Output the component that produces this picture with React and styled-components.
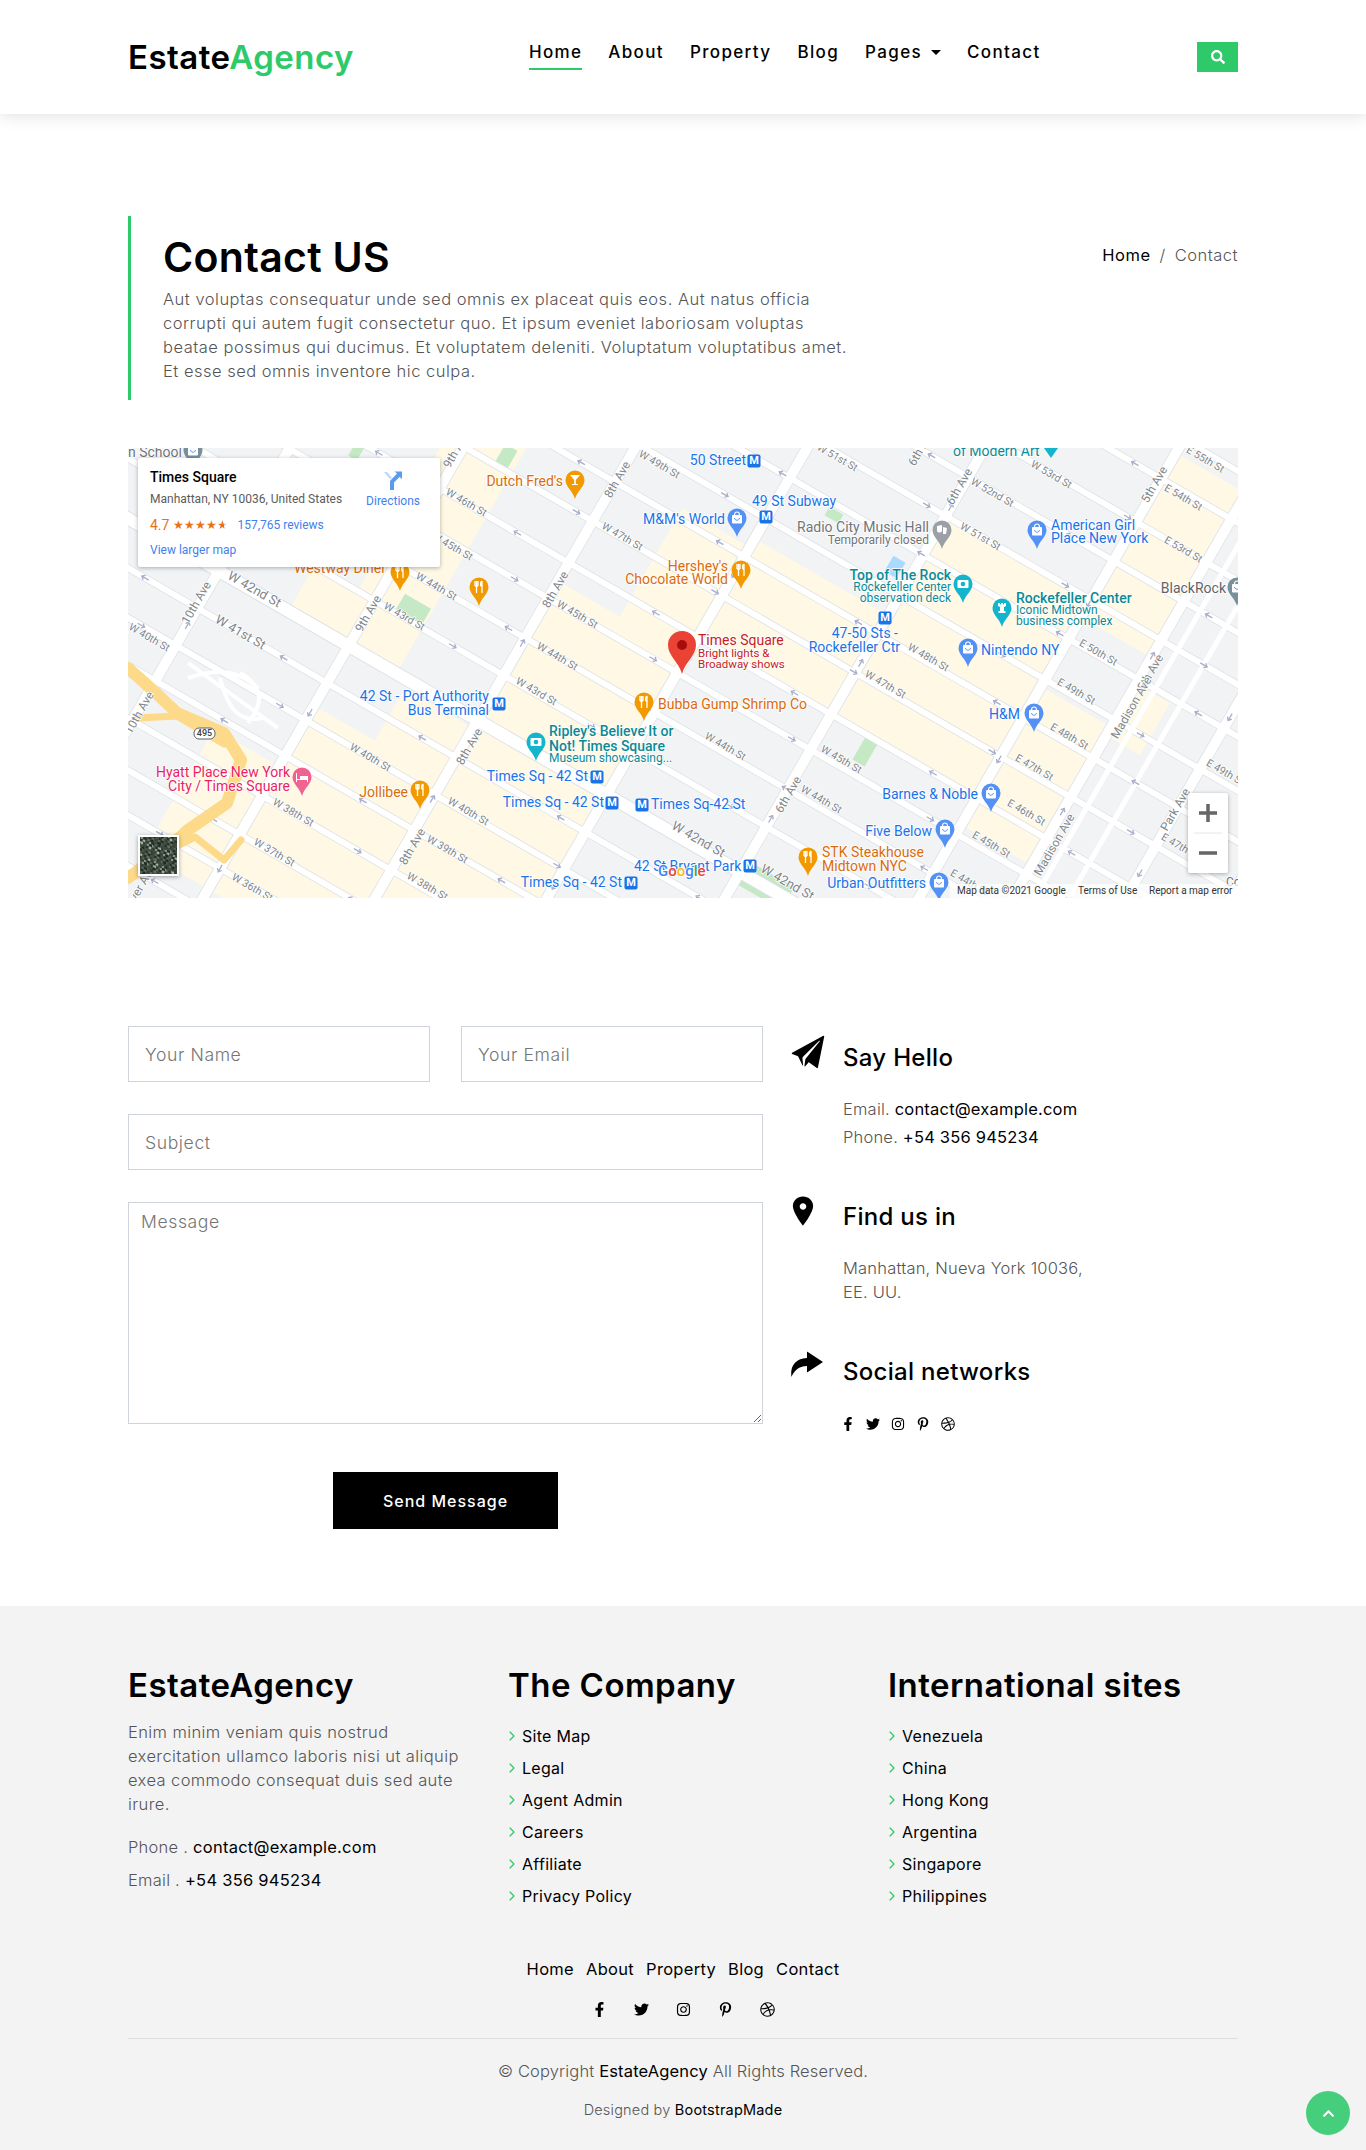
import React from 'react';
import styled, { createGlobalStyle } from 'styled-components';
import { FaSearch, FaFacebookF, FaTwitter, FaInstagram, FaPinterestP, FaDribbble, FaChevronUp } from 'react-icons/fa';
import { IoIosPaperPlane, IoIosPin, IoIosRedo, IoIosArrowForward } from 'react-icons/io';

const GlobalStyle = createGlobalStyle`
  * { box-sizing: border-box; }
  body {
    margin: 0;
    background: #fff;
    color: #555;
    font-family: Inter, 'Liberation Sans', sans-serif;
    font-size: 16.5px;
    letter-spacing: 0.5px;
    line-height: 24px;
  }
`;

const Container = styled.div`
  width: 1110px;
  margin: 0 auto;
`;

// Header
const Header = styled.header`
  height: 114px;
  background: #fff;
  box-shadow: 0 2px 15px rgba(0, 0, 0, 0.12);
`;

const HeaderRow = styled(Container)`
  display: flex;
  align-items: center;
  height: 100%;
`;

const Logo = styled.div`
  font-size: 33px;
  font-weight: 600;
  color: #000;
  letter-spacing: 0.45px;
  line-height: 40px;
  span { color: #2eca6a; }
`;

const Nav = styled.nav`
  display: flex;
  gap: 26px;
  margin-left: 175px;
  margin-top: -5px;
`;

const NavLink = styled.a`
  position: relative;
  color: #000;
  font-size: 17px;
  font-weight: 500;
  letter-spacing: 1.35px;
  padding-bottom: 4px;
  border-bottom: 2px solid ${(props) => (props.$active ? '#2eca6a' : 'transparent')};
`;

const Caret = styled.i`
  display: inline-block;
  margin-left: 9px;
  vertical-align: 3px;
  border-top: 5px solid #000;
  border-left: 5.5px solid transparent;
  border-right: 5.5px solid transparent;
`;

const SearchButton = styled.button`
  display: flex;
  align-items: center;
  justify-content: center;
  margin-left: auto;
  width: 41px;
  height: 30px;
  border: 0;
  background: #2eca6a;
  color: #fff;
  font-size: 14px;
`;

// Title
const TitleSection = styled(Container)`
  display: flex;
  justify-content: space-between;
  margin-top: 102px;
`;

const TitleBlock = styled.div`
  width: 720px;
  height: 184px;
  padding: 17px 0 0 32px;
  border-left: 3px solid #2eca6a;
`;

const Title = styled.h1`
  margin: 0 0 6px;
  color: #000;
  font-size: 41px;
  font-weight: 600;
  line-height: 48px;
  letter-spacing: 0.3px;
`;

const Lead = styled.p`
  margin: 0;
  width: 690px;
  font-weight: 300;
  color: #555;
`;

const Breadcrumb = styled.div`
  display: flex;
  gap: 9px;
  margin-top: 27px;
  font-weight: 300;
  color: #555;
  b { font-weight: 400; color: #000; }
`;

// Map
const MapFrame = styled(Container)`
  position: relative;
  height: 450px;
  margin-top: 48px;
  overflow: hidden;
  background: #f1f3f4;
  letter-spacing: 0;
  svg.map { display: block; }
`;

const MapText = styled.text`
  font-family: Roboto, 'Liberation Sans', sans-serif;
  font-size: ${(props) => props.$size || 13}px;
  font-weight: ${(props) => props.$weight || 400};
  fill: ${(props) => props.$color};
  text-anchor: ${(props) => props.$anchor || 'start'};
  stroke: #fff;
  stroke-width: ${(props) => (props.$halo === false ? 0 : 1.6)}px;
  paint-order: stroke;
  dominant-baseline: middle;
`;

const InfoCard = styled.div`
  position: absolute;
  left: 10px;
  top: 10px;
  width: 302px;
  height: 109px;
  padding: 9px 12px;
  background: #fff;
  border-radius: 2px;
  box-shadow: 0 1px 4px rgba(0, 0, 0, 0.3);
  font-family: Roboto, 'Liberation Sans', sans-serif;
  font-size: 12px;
  line-height: 16px;
  color: #5b5b5b;
`;

const PlaceName = styled.div`
  color: #000;
  font-size: 14px;
  font-weight: 500;
  line-height: 20px;
`;

const Address = styled.div`
  margin-top: 4px;
  font-size: 12px;
`;

const Rating = styled.div`
  display: flex;
  align-items: center;
  margin-top: 10px;
  color: #e7711b;
  font-size: 14px;
`;

const Stars = styled.span`
  margin: 0 9px 0 4px;
  font-size: 12px;
`;

const PartStar = styled.span`
  background: linear-gradient(90deg, #e7711b 65%, #c8c8c8 65%);
  -webkit-background-clip: text;
  background-clip: text;
  color: transparent;
`;

const CardLink = styled.a`
  color: #427fed;
  font-size: 12px;
`;

const LargerMap = styled(CardLink)`
  display: block;
  margin-top: 9px;
`;

const Directions = styled.div`
  position: absolute;
  top: 12px;
  right: 20px;
  display: flex;
  flex-direction: column;
  align-items: center;
  gap: 3px;
`;

// Contact
const ContactSection = styled(Container)`
  display: grid;
  grid-template-columns: 635px 445px;
  column-gap: 30px;
  margin-top: 128px;
`;

const Form = styled.form`
  display: grid;
  grid-template-columns: 302px 302px;
  column-gap: 31px;
  row-gap: 32px;
`;

const Field = styled.input`
  height: 56px;
  width: 100%;
  padding: 0 16px;
  border: 1px solid #ced4da;
  border-radius: 0;
  outline: none;
  font-family: inherit;
  font-size: 17.6px;
  letter-spacing: 0.6px;
  font-weight: 300;
  grid-column: ${(props) => (props.$wide ? '1 / 3' : 'auto')};
  ::placeholder { color: #6c757d; opacity: 1; }
`;

const MessageArea = styled.textarea`
  display: block;
  grid-column: 1 / 3;
  width: 100%;
  height: 222px;
  padding: 6px 12px;
  border: 1px solid #ced4da;
  border-radius: 0;
  outline: none;
  font-family: inherit;
  font-size: 17.6px;
  letter-spacing: 0.6px;
  line-height: 26px;
  font-weight: 300;
  ::placeholder { color: #6c757d; opacity: 1; }
`;

const SendButton = styled.button`
  grid-column: 1 / 3;
  justify-self: center;
  width: 225px;
  height: 57px;
  margin-top: 16px;
  border: 0;
  background: #000;
  color: #fff;
  font-family: inherit;
  font-size: 16px;
  font-weight: 500;
  letter-spacing: 1px;
`;

const InfoColumn = styled.div`
  display: flex;
  flex-direction: column;
  padding-top: 14px;
`;

const InfoBlock = styled.div`
  display: grid;
  grid-template-columns: 50px 1fr;
  margin-bottom: ${(props) => props.$gap}px;
`;

const InfoIcon = styled.div`
  color: #000;
  font-size: ${(props) => props.$size || 36}px;
  line-height: 0;
  margin-left: ${(props) => props.$left || 0}px;
  margin-top: ${(props) => props.$top || 0}px;
`;

const InfoHeading = styled.h4`
  margin: 0;
  color: #000;
  font-size: 24px;
  font-weight: 500;
  line-height: 36px;
  letter-spacing: 0.3px;
`;

const InfoBody = styled.div`
  margin-top: 21px;
  font-weight: 300;
  color: #555;
  letter-spacing: 0.2px;
  b { font-weight: 400; color: #000; }
`;

const InfoLine = styled.div`
  margin-bottom: 4px;
`;

const SocialRow = styled.div`
  display: flex;
  align-items: center;
  gap: 11px;
  margin-top: 27px;
  margin-left: -2px;
  color: #000;
  font-size: 14px;
`;

// Footer
const Footer = styled.footer`
  margin-top: 77px;
  height: 544px;
  background: #f3f3f3;
`;

const FooterColumns = styled(Container)`
  display: grid;
  grid-template-columns: 350px 350px 350px;
  column-gap: 30px;
  padding-top: 55px;
`;

const FooterHeading = styled.h3`
  margin: 0;
  color: #000;
  font-size: 33px;
  font-weight: 600;
  line-height: 48px;
  letter-spacing: 0.45px;
`;

const FooterText = styled.p`
  margin: 11px 0 19px;
  width: 340px;
  font-weight: 300;
  color: #555;
  letter-spacing: 0.4px;
`;

const FooterContact = styled.div`
  margin-bottom: 9px;
  font-weight: 300;
  letter-spacing: 0.25px;
  b { font-weight: 400; color: #000; }
`;

const FooterList = styled.ul`
  margin: 11px 0 0;
  padding: 0;
  list-style: none;
`;

const FooterItem = styled.li`
  display: flex;
  align-items: center;
  height: 32px;
  color: #000;
  font-weight: 400;
  font-size: 16px;
  letter-spacing: 0.3px;
  svg { color: #2eca6a; font-size: 14px; margin: 0 3px 0 -3px; }
`;

const FooterNav = styled.div`
  display: flex;
  justify-content: center;
  gap: 12px;
  margin-top: 45px;
  color: #000;
  letter-spacing: 0.3px;
`;

const FooterSocial = styled.div`
  display: flex;
  justify-content: center;
  gap: 27px;
  margin-top: 21px;
  color: #000;
  font-size: 15px;
  line-height: 0;
`;

const Divider = styled(Container)`
  margin-top: 21px;
  border-top: 1px solid #ddd;
`;

const Copyright = styled.div`
  margin-top: 20px;
  text-align: center;
  font-weight: 300;
  letter-spacing: 0.15px;
  b { font-weight: 400; color: #000; }
`;

const Credits = styled.div`
  margin-top: 15px;
  text-align: center;
  font-size: 14.5px;
  font-weight: 300;
  letter-spacing: 0.2px;
  b { font-weight: 400; color: #000; }
`;

const BackToTop = styled.a`
  position: fixed;
  right: 16px;
  bottom: 15px;
  display: flex;
  align-items: center;
  justify-content: center;
  width: 44px;
  height: 44px;
  border-radius: 50%;
  background: #45ce7b;
  color: #fff;
  font-size: 13px;
`;

// Map data, all in local px of the 1110x450 frame. u/v are the rotated grid.
const avenues = [-10, 140, 290, 439, 588, 742, 910, 991, 1089, 1180];
const narrowAvenues = [1010, 1040, 1250];
const streets = [-535, -490, -440, -395, -350, -305, -258, -214, -169, -121, -80, -34, 9, 104, 147, 188, 234, 279, 318, 362, 405];

const creamBlocks = [
  [748, 904, -352, -125],
  [594, 736, -235, -125],
  [510, 582, -225, 55],
  [445, 510, -100, 55],
  [296, 434, 130, 342],
  [360, 434, 70, 130],
  [445, 582, 66, 342],
  [215, 284, 200, 342],
  [220, 284, 10, 55],
  [916, 985, -520, -330],
  [916, 985, -250, -90],
  [270, 345, -210, 55],
  [996, 1030, -300, -240],
];

const greens = [
  [378, 9, 14, 22],
  [285, 162, 30, 20],
  [706, 67, 16, 10],
  [228, 4, 10, 14],
  [738, 302, 14, 30],
  [638, 438, 50, 26],
];

const streetLabels = [
  ['W 46th St', 338, 55], ['W 47th St', 494, 89], ['W 45th St', 324, 99], ['W 44th St', 308, 139],
  ['W 43rd St', 276, 169], ['W 45th St', 449, 167], ['W 44th St', 429, 209], ['W 42nd St', 126, 142, 13],
  ['W 41st St', 112, 185, 13], ['W 40th St', 21, 190], ['W 49th St', 531, 17], ['W 51st St', 709, 10],
  ['W 53rd St', 923, 27], ['W 52nd St', 864, 45], ['W 51st St', 852, 89], ['E 55th St', 1077, 12],
  ['E 54th St', 1055, 50], ['E 53rd St', 1055, 102], ['E 50th St', 970, 205], ['W 48th St', 800, 210],
  ['W 43rd St', 408, 244], ['W 40th St', 242, 310], ['W 40th St', 340, 364], ['W 38th St', 165, 365],
  ['W 39th St', 319, 402], ['W 37th St', 146, 405], ['W 38th St', 299, 439], ['W 36th St', 124, 440],
  ['W 47th St', 757, 237], ['W 44th St', 597, 299], ['W 45th St', 713, 312], ['W 44th St', 693, 352],
  ['W 42nd St', 570, 392, 13], ['W 42nd St', 659, 435, 13], ['E 49th St', 948, 244], ['E 48th St', 941, 289],
  ['E 47th St', 906, 320], ['E 46th St', 898, 365], ['E 45th St', 863, 397], ['E 44th St', 841, 435],
  ['E 49th St', 1097, 325], ['E 47th St', 1052, 399],
];

const avenueLabels = [
  ['8th Ave', 490, 32], ['8th Ave', 428, 142], ['9th Ave', 241, 166], ['9th Ave', 329, 2],
  ['10th Ave', 69, 155], ['10th Ave', 12, 265], ['8th Ave', 342, 299], ['8th Ave', 285, 399],
  ['6th Ave', 832, 39], ['6th Ave', 661, 347], ['5th Ave', 1027, 37], ['5th Ave', 1023, 225],
  ['Madison Ave', 1004, 260], ['Madison Ave', 927, 397], ['Park Ave', 1048, 362], ['Dyer Ave', 13, 439],
  ['6th Ave', 794, 0],
];

const BLUE = '#1a73e8';
const ORANGE = '#d96c0c';
const TEAL = '#0b8a96';
const PINK = '#e91e63';
const GRAY = '#70757a';
const RED = '#c5221f';

const placeLabels = [
  ['n School', 0, 5, GRAY, 'start', 14],
  ["Dutch Fred's", 435, 34, ORANGE, 'end', 14],
  ['Westway Diner', 258, 121, ORANGE, 'end', 14],
  ["Hershey's", 600, 119, ORANGE, 'end', 14],
  ['Chocolate World', 600, 132, ORANGE, 'end', 14],
  ['Bubba Gump Shrimp Co', 530, 257, ORANGE, 'start', 14],
  ['Jollibee', 280, 345, ORANGE, 'end', 14],
  ['STK Steakhouse', 694, 405, ORANGE, 'start', 14],
  ['Midtown NYC', 694, 419, ORANGE, 'start', 14],
  ["M&M's World", 597, 72, BLUE, 'end', 14],
  ['American Girl', 923, 78, BLUE, 'start', 14],
  ['Place New York', 923, 91, BLUE, 'start', 14],
  ['Nintendo NY', 853, 203, BLUE, 'start', 14],
  ['H&M', 892, 267, BLUE, 'end', 14],
  ['Barnes & Noble', 850, 347, BLUE, 'end', 14],
  ['Five Below', 804, 384, BLUE, 'end', 14],
  ['Urban Outfitters', 798, 436, BLUE, 'end', 14],
  ['50 Street', 618, 13, BLUE, 'end', 14],
  ['49 St Subway', 624, 54, BLUE, 'start', 14],
  ['47-50 Sts -', 770, 186, BLUE, 'end', 14],
  ['Rockefeller Ctr', 772, 200, BLUE, 'end', 14],
  ['42 St - Port Authority', 361, 249, BLUE, 'end', 14],
  ['Bus Terminal', 361, 263, BLUE, 'end', 14],
  ['Times Sq - 42 St', 460, 329, BLUE, 'end', 14],
  ['Times Sq - 42 St', 476, 355, BLUE, 'end', 14],
  ['Times Sq-42 St', 523, 357, BLUE, 'start', 14],
  ['Times Sq - 42 St', 494, 435, BLUE, 'end', 14],
  ['42 St Bryant Park', 506, 419, BLUE, 'start', 14],
  ['of Modern Art', 825, 4, TEAL, 'start', 14],
  ['Top of The Rock', 823, 128, TEAL, 'end', 14, 500],
  ['Rockefeller Center', 823, 140, TEAL, 'end', 12],
  ['observation deck', 823, 151, TEAL, 'end', 12],
  ['Rockefeller Center', 888, 151, TEAL, 'start', 14, 500],
  ['Iconic Midtown', 888, 163, TEAL, 'start', 12],
  ['business complex', 888, 174, TEAL, 'start', 12],
  ["Ripley's Believe It or", 421, 284, TEAL, 'start', 14, 500],
  ['Not! Times Square', 421, 299, TEAL, 'start', 14, 500],
  ['Museum showcasing...', 421, 311, TEAL, 'start', 12],
  ['Radio City Music Hall', 801, 80, GRAY, 'end', 14],
  ['Temporarily closed', 801, 93, GRAY, 'end', 12],
  ['BlackRock', 1098, 141, '#5f6368', 'end', 14],
  ['Hyatt Place New York', 162, 325, PINK, 'end', 14],
  ['City / Times Square', 162, 339, PINK, 'end', 14],
  ['Times Square', 570, 193, RED, 'start', 14],
  ['Bright lights &', 570, 206, RED, 'start', 11.5],
  ['Broadway shows', 570, 217, RED, 'start', 11.5],
  ['Cor', 1098, 435, GRAY, 'start', 12],
];

const pins = [
  [447, 32, '#f29900', 'glass'], [272, 124, '#f29900', 'food'], [351, 139, '#f29900', 'food'],
  [613, 122, '#f29900', 'food'], [516, 254, '#f29900', 'food'], [292, 342, '#f29900', 'food'],
  [680, 409, '#f29900', 'food'], [609, 70, '#5491f5', 'bag'], [909, 82, '#5491f5', 'bag'],
  [840, 200, '#5491f5', 'bag'], [906, 265, '#5491f5', 'bag'], [863, 345, '#5491f5', 'bag'],
  [817, 381, '#5491f5', 'bag'], [811, 434, '#5491f5', 'bag'], [835, 136, '#12b5cb', 'camera'],
  [874, 160, '#12b5cb', 'tower'], [408, 294, '#12b5cb', 'camera'], [814, 82, '#9aa0a6', 'mask'],
  [1109, 139, '#78909c', 'bag'], [174, 329, '#f06292', 'bed'], [65, 2, '#78909c', 'bag'],
];

const subways = [[626, 13], [638, 69], [757, 170], [371, 256], [469, 329], [484, 355], [514, 357], [503, 435], [622, 418]];

function Glyph({ kind }) {
  if (kind === 'food') {
    return <path d="M-4-6v5M-2.5-6v5M-1-6v5M-4-1h3M-2.5-1v7M3-6v12M3-6c-2 1-2 5 0 6" stroke="#fff" strokeWidth="1.3" fill="none" />;
  }
  if (kind === 'glass') {
    return <path d="M-5-5H5L.8 0V4H3V5H-3V4H-.8V0Z" fill="#fff" />;
  }
  if (kind === 'camera') {
    return (
      <g>
        <rect x="-5.5" y="-4" width="11" height="8" rx="1" fill="#fff" />
        <circle r="2.3" fill="#12b5cb" />
      </g>
    );
  }
  if (kind === 'tower') {
    return <path d="M-4-5h2v1.5h1V-5h2v1.5h1V-5h2v3L2-1V3H3.5V5H-3.5V3H-2V-1L-4-2Z" fill="#fff" />;
  }
  if (kind === 'mask') {
    return <path d="M-5-4 0-5V1C-1 3-4 3-5 1ZM1-3 5-2 4 4 1 4Z" fill="#fff" />;
  }
  if (kind === 'bed') {
    return <path d="M-6-4V5H-5V3H5V5H6V-1H-2V2H-5V-4Z" fill="#fff" />;
  }
  return (
    <g fill="none" stroke="#fff">
      <rect x="-5" y="-3" width="10" height="8.5" rx="1" fill="#fff" stroke="none" />
      <path d="M-2.5-3c0-4 5-4 5 0" strokeWidth="1.2" />
      <path d="M-2.5 0c.5 3 4.500 3 5 0" stroke="#5491f5" strokeWidth="1" />
    </g>
  );
}

function Pin({ x, y, color, kind }) {
  return (
    <g transform={`translate(${x} ${y})`}>
      <path d="M0 19C-2 11-9.500 7-9.500 0A9.500 9.500 0 1 1 9.500 0C9.500 7 2 11 0 19Z" fill={color} />
      <Glyph kind={kind} />
    </g>
  );
}

function Subway({ x, y }) {
  return (
    <g transform={`translate(${x} ${y})`}>
      <rect x="-6.500" y="-6.500" width="13" height="13" rx="2" fill={BLUE} />
      <MapText $size={11} $weight={700} $color="#fff" $anchor="middle" $halo={false} y="0.5">M</MapText>
    </g>
  );
}

function OneWayArrows() {
  const items = [];
  streets.forEach((v, i) => {
    const dir = i % 2 === 0 ? 0 : 180;
    for (let u = 60; u < 1300; u += 160) {
      items.push(<path key={`s${v}-${u}`} transform={`translate(${u + (i % 3) * 20} ${v}) rotate(${dir})`} d="M-4 0H4M1-2.500 4 0 1 2.500" stroke="#a8aecb" strokeWidth="1.300" fill="none" />);
    }
  });
  avenues.forEach((u, i) => {
    const dir = i % 2 === 0 ? 90 : -90;
    for (let v = -430; v < 360; v += 180) {
      items.push(<path key={`a${u}-${v}`} transform={`translate(${u} ${v + i * 14}) rotate(${dir})`} d="M-4 0H4M1-2.500 4 0 1 2.500" stroke="#a8aecb" strokeWidth="1.300" fill="none" />);
    }
  });
  return items;
}

function SatelliteThumb() {
  const dots = [];
  for (let i = 0; i < 220; i++) {
    const px = 12 + ((i * 13) % 37);
    const py = 389 + ((i * 29 + (i % 7) * 5) % 37);
    dots.push(<circle key={i} cx={px} cy={py} r={0.6 + (i % 3) * 0.4} fill={i % 4 === 0 ? '#a4ad9c' : i % 4 === 1 ? '#5f6f57' : '#20281f'} />);
  }
  return (
    <g>
      <rect x="10" y="387" width="41" height="41" fill="#fff" style={{ filter: 'drop-shadow(0 1px 2px rgba(0,0,0,.35))' }} />
      <svg x="12" y="389" width="37" height="37" viewBox="12 389 37 37">
        <rect x="12" y="389" width="37" height="37" fill="#3c4a40" />
        {dots}
      </svg>
    </g>
  );
}

function MapDrawing() {
  return (
    <svg className="map" width="1110" height="450" viewBox="0 0 1110 450">
      <rect width="1110" height="450" fill="#f1f3f4" />
      <g transform="rotate(30)">
        {creamBlocks.map(([u0, u1, v0, v1]) => (
          <rect key={`${u0}${v0}`} x={u0} y={v0} width={u1 - u0} height={v1 - v0} fill="#fef8e4" />
        ))}
      </g>
      {greens.map(([x, y, w, h]) => (
        <rect key={`${x}${y}`} x={x - w / 2} y={y - h / 2} width={w} height={h} fill="#c5e8c5" transform={`rotate(30 ${x} ${y})`} />
      ))}
      <rect x="760" y="110" width="14" height="18" fill="#aadaff" transform="rotate(30 767 119)" />
      <g transform="rotate(30)">
        {streets.map((v) => <rect key={v} x="-400" y={v - 3.800} width="1900" height="7.600" fill="#dfe2e6" />)}
        {avenues.map((u) => <rect key={u} x={u - 5.800} y="-800" width="11.600" height="1500" fill="#dfe2e6" />)}
        <rect x="-400" y="54" width="1900" height="14" fill="#dfe2e6" />
        {streets.map((v) => <rect key={v} x="-400" y={v - 3} width="1900" height="6" fill="#fff" />)}
        <rect x="-400" y="55" width="1900" height="12" fill="#fff" />
        {avenues.map((u) => <rect key={u} x={u - 5} y="-800" width="10" height="1500" fill="#fff" />)}
        {narrowAvenues.map((u) => <rect key={u} x={u - 2.500} y="-800" width="5" height="1500" fill="#fff" />)}
        <OneWayArrows />
      </g>
      <g fill="none" stroke="#fdd98a" strokeLinecap="round" strokeLinejoin="round">
        <path d="M0 220 28 245 49 265 96 285 113 312 99 355 60 382 38 402 0 430" strokeWidth="12" />
        <path d="M10 270 49 268 96 296" strokeWidth="7" />
        <path d="M45 400 67 389 96 412 113 392" strokeWidth="7" />
      </g>
      <g fill="none" stroke="#fff" strokeWidth="4">
        <path d="M60 230C90 220 110 222 130 240M92 230C100 260 110 275 135 270M112 225C130 235 140 250 120 275M60 215 150 280" />
      </g>
      <g>
        <rect x="66" y="280" width="21" height="11" rx="5" fill="#fff" stroke="#5f6368" />
        <MapText $size={9} $weight={500} $color="#3c4043" $anchor="middle" $halo={false} x="76.500" y="286">495</MapText>
      </g>
      {streetLabels.map(([t, x, y, size]) => (
        <MapText key={`${t}${x}`} $size={size || 10.500} $color="#80868b" $anchor="middle" transform={`translate(${x} ${y}) rotate(30)`}>{t}</MapText>
      ))}
      {avenueLabels.map(([t, x, y]) => (
        <MapText key={`${t}${x}`} $size={12} $color="#80868b" $anchor="middle" transform={`translate(${x} ${y}) rotate(-60)`}>{t}</MapText>
      ))}
      {pins.map(([x, y, color, kind]) => <Pin key={`${x}${y}`} x={x} y={y} color={color} kind={kind} />)}
      <path d="M923 10 916 0H930Z" fill="#12b5cb" />
      <path d="M554 226C551 214 540 208 540 197A14 14 0 1 1 568 197C568 208 557 214 554 226Z" fill="#ea4335" />
      <circle cx="554" cy="197" r="5" fill="#a50e0e" />
      {subways.map(([x, y]) => <Subway key={`${x}${y}`} x={x} y={y} />)}
      {placeLabels.map(([t, x, y, color, anchor, size, weight]) => (
        <MapText key={`${t}${x}${y}`} x={x} y={y} $color={color} $anchor={anchor} $size={size} $weight={weight}>{t}</MapText>
      ))}
      <MapText x="530" y="424" $size={15} $weight={500} $color="#4285f4">G<tspan fill="#ea4335">o</tspan><tspan fill="#fbbc05">o</tspan><tspan fill="#4285f4">g</tspan><tspan fill="#34a853">l</tspan><tspan fill="#ea4335">e</tspan></MapText>
      <rect x="822" y="436" width="288" height="14" fill="#fff" fillOpacity="0.7" />
      <MapText x="829" y="443" $size={10} $color="#333" $halo={false}>Map data ©2021 Google</MapText>
      <MapText x="950" y="443" $size={10} $color="#333" $halo={false}>Terms of Use</MapText>
      <MapText x="1021" y="443" $size={10} $color="#333" $halo={false}>Report a map error</MapText>
      <SatelliteThumb />
      <g>
        <rect x="1060" y="345" width="40" height="80" rx="2" fill="#fff" style={{ filter: 'drop-shadow(0 1px 2px rgba(0,0,0,.3))' }} />
        <path d="M1066 385H1094" stroke="#e6e6e6" />
        <path d="M1071 365H1089M1080 356V374M1071 405H1089" stroke="#666" strokeWidth="3.500" />
      </g>
    </svg>
  );
}

function DirectionsIcon() {
  return (
    <svg width="20" height="20" viewBox="0 0 20 20">
      <path d="M7 9 1 2H4L9 8Z" fill="#b9d8fb" />
      <path d="M7 20V11L14 3.500 11.500 1.500H19V9L16.500 7 11 12.500V20Z" fill="#5b9bec" />
    </svg>
  );
}

const navItems = ['Home', 'About', 'Property', 'Blog', 'Pages', 'Contact'];
const companyLinks = ['Site Map', 'Legal', 'Agent Admin', 'Careers', 'Affiliate', 'Privacy Policy'];
const siteLinks = ['Venezuela', 'China', 'Hong Kong', 'Argentina', 'Singapore', 'Philippines'];

function LinkList({ items }) {
  return (
    <FooterList>
      {items.map((item) => (
        <FooterItem key={item}>
          <IoIosArrowForward />
          {item}
        </FooterItem>
      ))}
    </FooterList>
  );
}

function App() {
  return (
    <>
      <GlobalStyle />
      <Header>
        <HeaderRow>
          <Logo>
            Estate<span>Agency</span>
          </Logo>
          <Nav>
            {navItems.map((item) => (
              <NavLink key={item} $active={item === 'Home'}>
                {item}
                {item === 'Pages' && <Caret />}
              </NavLink>
            ))}
          </Nav>
          <SearchButton aria-label="Search">
            <FaSearch />
          </SearchButton>
        </HeaderRow>
      </Header>

      <TitleSection>
        <TitleBlock>
          <Title>Contact US</Title>
          <Lead>
            Aut voluptas consequatur unde sed omnis ex placeat quis eos. Aut natus officia corrupti qui autem fugit
            consectetur quo. Et ipsum eveniet laboriosam voluptas beatae possimus qui ducimus. Et voluptatem deleniti.
            Voluptatum voluptatibus amet. Et esse sed omnis inventore hic culpa.
          </Lead>
        </TitleBlock>
        <Breadcrumb>
          <b>Home</b>
          <span>/</span>
          <span>Contact</span>
        </Breadcrumb>
      </TitleSection>

      <MapFrame>
        <MapDrawing />
        <InfoCard>
          <PlaceName>Times Square</PlaceName>
          <Address>Manhattan, NY 10036, United States</Address>
          <Rating>
            4.7
            <Stars>
              ★★★★<PartStar>★</PartStar>
            </Stars>
            <CardLink>157,765 reviews</CardLink>
          </Rating>
          <LargerMap>View larger map</LargerMap>
          <Directions>
            <DirectionsIcon />
            <CardLink>Directions</CardLink>
          </Directions>
        </InfoCard>
      </MapFrame>

      <ContactSection>
        <Form>
          <Field placeholder="Your Name" />
          <Field placeholder="Your Email" />
          <Field $wide placeholder="Subject" />
          <MessageArea placeholder="Message" />
          <SendButton type="button">Send Message</SendButton>
        </Form>
        <InfoColumn>
          <InfoBlock $gap={46}>
            <InfoIcon $size={40} $left={-5} $top={-8}>
              <IoIosPaperPlane />
            </InfoIcon>
            <div>
              <InfoHeading>Say Hello</InfoHeading>
              <InfoBody>
                <InfoLine>
                  Email. <b>contact@example.com</b>
                </InfoLine>
                <InfoLine>
                  Phone. <b>+54 356 945234</b>
                </InfoLine>
              </InfoBody>
            </div>
          </InfoBlock>
          <InfoBlock $gap={50}>
            <InfoIcon $size={36} $left={-8} $top={-6}>
              <IoIosPin />
            </InfoIcon>
            <div>
              <InfoHeading>Find us in</InfoHeading>
              <InfoBody>
                Manhattan, Nueva York 10036,
                <br />
                EE. UU.
              </InfoBody>
            </div>
          </InfoBlock>
          <InfoBlock $gap={0}>
            <InfoIcon $size={36} $left={-4} $top={-8}>
              <IoIosRedo />
            </InfoIcon>
            <div>
              <InfoHeading>Social networks</InfoHeading>
              <SocialRow>
                <FaFacebookF />
                <FaTwitter />
                <FaInstagram />
                <FaPinterestP />
                <FaDribbble />
              </SocialRow>
            </div>
          </InfoBlock>
        </InfoColumn>
      </ContactSection>

      <Footer>
        <FooterColumns>
          <div>
            <FooterHeading>EstateAgency</FooterHeading>
            <FooterText>
              Enim minim veniam quis nostrud exercitation ullamco laboris nisi ut aliquip exea commodo consequat duis
              sed aute irure.
            </FooterText>
            <FooterContact>
              Phone . <b>contact@example.com</b>
            </FooterContact>
            <FooterContact>
              Email . <b>+54 356 945234</b>
            </FooterContact>
          </div>
          <div>
            <FooterHeading>The Company</FooterHeading>
            <LinkList items={companyLinks} />
          </div>
          <div>
            <FooterHeading>International sites</FooterHeading>
            <LinkList items={siteLinks} />
          </div>
        </FooterColumns>
        <FooterNav>
          {['Home', 'About', 'Property', 'Blog', 'Contact'].map((item) => (
            <span key={item}>{item}</span>
          ))}
        </FooterNav>
        <FooterSocial>
          <FaFacebookF />
          <FaTwitter />
          <FaInstagram />
          <FaPinterestP />
          <FaDribbble />
        </FooterSocial>
        <Divider />
        <Copyright>
          © Copyright <b>EstateAgency</b> All Rights Reserved.
        </Copyright>
        <Credits>
          Designed by <b>BootstrapMade</b>
        </Credits>
      </Footer>
      <BackToTop>
        <FaChevronUp />
      </BackToTop>
    </>
  );
}

export default App;
